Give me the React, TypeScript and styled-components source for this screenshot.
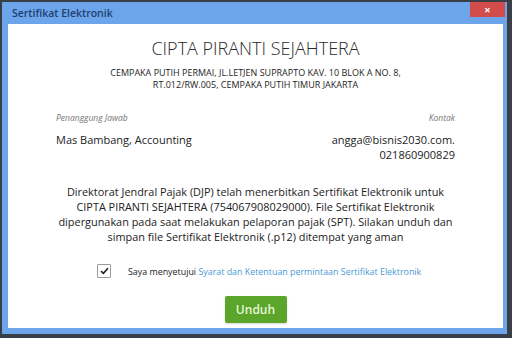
import styled, { createGlobalStyle } from 'styled-components';

const GlobalStyle = createGlobalStyle`
  html, body {
    margin: 0;
    padding: 0;
    background: #393e47;
    font-family: "Open Sans", "Liberation Sans", sans-serif;
  }
`;

const Screen = styled.div`
  width: 512px;
  height: 338px;
  box-sizing: border-box;
  padding: 2px 5px 4px 2px;
`;

const Modal = styled.div`
  position: relative;
  height: 100%;
  box-sizing: border-box;
  background: #6da5ea;
  padding: 0 4px 6px 6px;
  display: flex;
  flex-direction: column;
`;

const TitleBar = styled.div`
  height: 22px;
  display: flex;
  align-items: center;
  padding-left: 4px;
  font-size: 10.5px;
  font-weight: 600;
  color: #1d3f70;
`;

const CloseButton = styled.button`
  position: absolute;
  top: 0;
  right: 2px;
  width: 35px;
  height: 15px;
  border: none;
  padding: 0;
  background: #d24c4c;
  color: #fff;
  font-size: 11px;
  font-weight: 700;
  line-height: 15px;
  font-family: inherit;
`;

const Body = styled.div`
  flex: 1;
  background: #fff;
  padding: 12px 48px 0;
  display: flex;
  flex-direction: column;
  color: #333;
`;

const Company = styled.h1`
  margin: 0;
  text-align: center;
  font-size: 18px;
  line-height: 24px;
  font-weight: 300;
  color: #2a2a2a;
`;

const Address = styled.p`
  margin: 7px 0 0;
  text-align: center;
  font-size: 9px;
  line-height: 12px;
  color: #1e1e1e;
`;

const InfoRow = styled.div`
  margin-top: 21px;
  display: flex;
  justify-content: space-between;
`;

const InfoCol = styled.div<{ $right?: boolean }>`
  display: flex;
  flex-direction: column;
  text-align: ${p => (p.$right ? 'right' : 'left')};
`;

const Label = styled.span`
  font-size: 8.5px;
  font-style: italic;
  color: #777;
  line-height: 12px;
`;

const Value = styled.span`
  margin-top: 8px;
  font-size: 11px;
  line-height: 15px;
  color: #222;
`;

const Notice = styled.p`
  margin: 22px 0 0;
  text-align: center;
  font-size: 10.9px;
  line-height: 15px;
  color: #222;
`;

const AgreeRow = styled.label`
  margin-top: 20px;
  margin-left: 41px;
  display: flex;
  align-items: center;
  gap: 17px;
  font-size: 8.9px;
  color: #222;
`;

const Box = styled.span`
  width: 12px;
  height: 12px;
  border: 1px solid #999;
  border-radius: 1px;
  background: #fff;
  display: flex;
  align-items: center;
  justify-content: center;
`;

const Link = styled.a`
  color: #4a9ad4;
  text-decoration: none;
`;

const Actions = styled.div`
  margin-top: 18px;
  display: flex;
  justify-content: center;
`;

const Button = styled.button`
  width: 62px;
  height: 27px;
  border: none;
  border-radius: 2px;
  background: #5aa52a;
  color: #e8f7d8;
  font-family: inherit;
  font-size: 12px;
  font-weight: 600;
  box-shadow: 0 1px 2px rgba(0, 0, 0, 0.15);
`;

export default function App() {
  return (
    <>
      <GlobalStyle />
      <Screen>
        <Modal>
          <TitleBar>Sertifikat Elektronik</TitleBar>
          <CloseButton>×</CloseButton>
          <Body>
            <Company>CIPTA PIRANTI SEJAHTERA</Company>
            <Address>
              CEMPAKA PUTIH PERMAI, JL.LETJEN SUPRAPTO KAV. 10 BLOK A NO. 8,
              <br />
              RT.012/RW.005, CEMPAKA PUTIH TIMUR JAKARTA
            </Address>

            <InfoRow>
              <InfoCol>
                <Label>Penanggung Jawab</Label>
                <Value>Mas Bambang, Accounting</Value>
              </InfoCol>
              <InfoCol $right>
                <Label>Kontak</Label>
                <Value>
                  angga@bisnis2030.com.
                  <br />
                  021860900829
                </Value>
              </InfoCol>
            </InfoRow>

            <Notice>
              Direktorat Jendral Pajak (DJP) telah menerbitkan Sertifikat Elektronik untuk
              <br />
              CIPTA PIRANTI SEJAHTERA (754067908029000). File Sertifikat Elektronik
              <br />
              dipergunakan pada saat melakukan pelaporan pajak (SPT). Silakan unduh dan
              <br />
              simpan file Sertifikat Elektronik (.p12) ditempat yang aman
            </Notice>

            <AgreeRow>
              <Box>
                <svg width="9" height="8" viewBox="0 0 9 8">
                  <path d="M1 4.2 L3.4 6.4 L8 1.2" fill="none" stroke="#222" strokeWidth="1.6" />
                </svg>
              </Box>
              <span>
                Saya menyetujui <Link href="#">Syarat dan Ketentuan permintaan Sertifikat Elektronik</Link>
              </span>
            </AgreeRow>

            <Actions>
              <Button>Unduh</Button>
            </Actions>
          </Body>
        </Modal>
      </Screen>
    </>
  );
}
